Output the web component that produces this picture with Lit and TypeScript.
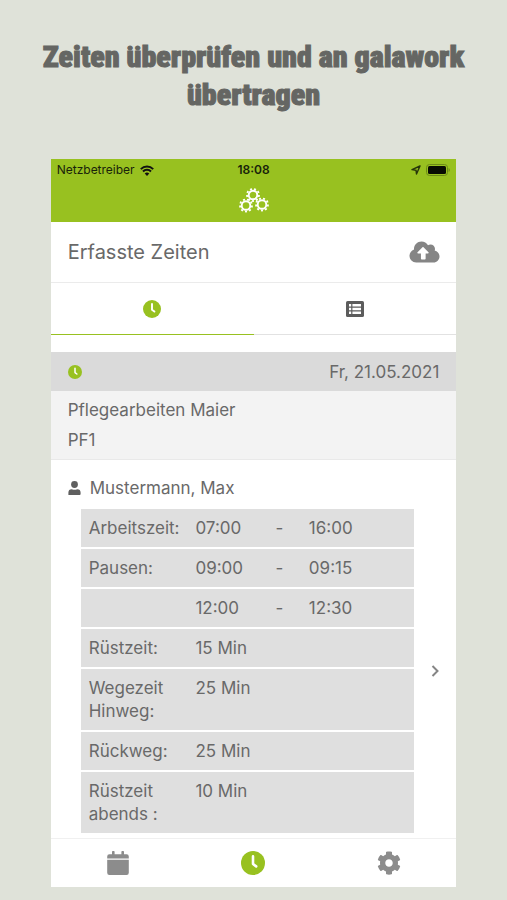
import { LitElement, html, css, svg, nothing } from "lit";
import { customElement, property, state } from "lit/decorators.js";

const icons = {
  clock: svg`<circle cx="12" cy="12" r="12" fill="currentColor"/><path d="M12 5.4V13l3.2 2.4" fill="none" stroke="#fff" stroke-width="2.6" stroke-linecap="round" stroke-linejoin="round"/>`,
  list: svg`<rect x="3" y="4" width="18" height="16" rx="1.6" fill="currentColor"/><path fill="#fff" d="M6 7h2.2v2.4H6zM9.4 7H18v2.4H9.4zM6 10.8h2.2v2.4H6zM9.4 10.8H18v2.4H9.4zM6 14.6h2.2V17H6zM9.4 14.6H18V17H9.4z"/>`,
  calendar: svg`<path fill="currentColor" d="M1.2 7.6V5.4Q1.2 3.2 3.4 3.2H6V.8Q6 0 6.8 0h1q.8 0 .8.8v2.4h6.8V.8q0-.8.8-.8h1q.8 0 .8.8v2.4h2.6q2.2 0 2.2 2.2v2.2zM1.2 8.8h21.6v13q0 2.2-2.2 2.2H3.4q-2.2 0-2.2-2.2z"/>`,
};

@customElement("app-icon")
export class AppIcon extends LitElement {
  static styles = css`
    :host { display: inline-flex; }
    svg { display: block; width: 100%; height: 100%; }
  `;
  @property() name: keyof typeof icons = "clock";
  render() {
    return html`<svg viewBox="0 0 24 24" aria-hidden="true">${icons[this.name]}</svg>`;
  }
}

const gear = (x: number, y: number) => svg`
  <circle cx=${x} cy=${y} r="4.3" stroke-width="1.9"/>
  <circle cx=${x} cy=${y} r="6" stroke-width="1.8" pathLength="18" stroke-dasharray="1 1"/>`;

interface Entry {
  label: string;
  from: string;
  to?: string;
}

@customElement("app-root")
export class AppRoot extends LitElement {
  static styles = css`
    :host {
      display: block;
      min-height: 100vh;
      box-sizing: border-box;
      padding: 38px 10% 14px;
      background: #dfe2d9;
      color: #696969;
      font-family: Inter, Roboto, sans-serif;
      font-size: 17px;
      line-height: 22px;
    }
    h1 {
      margin: 0 -32px 45px;
      color: #656663;
      font: 900 30px/38px Impact, "Roboto Condensed", Roboto, sans-serif;
      -webkit-text-stroke: 1px currentColor;
      text-align: center;
    }
    .phone { display: flex; flex-direction: column; background: #fff; }
    .top { background: #98c120; color: #18230a; padding-bottom: 6px; }
    .status {
      display: grid;
      grid-template-columns: 1fr auto 1fr;
      align-items: center;
      padding: 0 6px;
      font-size: 12px;
      line-height: 22px;
    }
    .status b { font-weight: 600; }
    .side { display: flex; align-items: center; gap: 5px; }
    .end { justify-content: flex-end; }
    .wifi { width: 14px; height: 11px; }
    .arrow { width: 10px; height: 10px; }
    .battery { width: 24px; height: 12px; }
    .logo { display: block; width: 32px; height: 30px; margin: 5px auto 0; }
    .title {
      display: flex;
      align-items: center;
      justify-content: space-between;
      padding: 0 16px 0 17px;
      height: 60px;
      border-bottom: 1px solid #ebebeb;
    }
    h2 { margin: 0; font-size: 20px; font-weight: 400; line-height: 26px; }
    button {
      display: flex;
      align-items: center;
      justify-content: center;
      border: 0;
      padding: 0;
      background: none;
      color: #858585;
      font: inherit;
      cursor: pointer;
    }
    .cloud { width: 31px; height: 24px; }
    .tabs { display: grid; grid-template-columns: 1fr 1fr; margin-bottom: 17px; }
    .tab { height: 52px; border-bottom: 1px solid #e2e2e2; color: #5c5c5c; }
    .tab.on { color: #98c120; border-bottom-color: #98c120; }
    .tab app-icon { width: 18px; height: 18px; }
    .tab .wide { width: 24px; height: 24px; }
    .date {
      display: flex;
      align-items: center;
      justify-content: space-between;
      height: 39px;
      padding: 0 17px;
      background: #dadada;
    }
    .date app-icon { width: 14px; height: 14px; color: #98c120; }
    .job {
      padding: 4px 17px;
      line-height: 30px;
      background: #f3f3f3;
      border-bottom: 1px solid #e9e9e9;
    }
    .job p { margin: 0; }
    .person { display: flex; align-items: center; gap: 8px; padding: 17px 17px 9px; }
    .user { width: 14px; height: 14px; color: #5f5f5f; }
    .record { display: flex; align-items: center; padding: 0 16px 4px 30px; }
    table {
      flex: 1;
      margin: -1px 0;
      table-layout: fixed;
      border-collapse: separate;
      border-spacing: 0 2px;
      line-height: 23px;
    }
    .c1 { width: 32%; }
    .c2 { width: 24%; }
    .c3 { width: 10%; }
    .c4 { width: 34%; }
    th, td {
      padding: 8px 0 7px 8px;
      background: #dfdfdf;
      font-weight: 400;
      text-align: left;
      vertical-align: top;
    }
    .next { width: 26px; height: 44px; justify-content: flex-end; }
    .chevron { width: 9px; height: 14px; }
    nav {
      display: grid;
      grid-template-columns: repeat(3, 1fr);
      border-top: 1px solid #f0f0f0;
    }
    nav button { height: 48px; color: #8c8c8c; }
    nav .on { color: #98c120; }
    nav app-icon, .cog { width: 24px; height: 24px; }
  `;

  @state() private tab = 0;

  private entries: Entry[] = [
    { label: "Arbeitszeit:", from: "07:00", to: "16:00" },
    { label: "Pausen:", from: "09:00", to: "09:15" },
    { label: "", from: "12:00", to: "12:30" },
    { label: "Rüstzeit:", from: "15 Min" },
    { label: "Wegezeit Hinweg:", from: "25 Min" },
    { label: "Rückweg:", from: "25 Min" },
    { label: "Rüstzeit abends :", from: "10 Min" },
  ];

  render() {
    return html`
      <h1>Zeiten überprüfen und an galawork übertragen</h1>
      <main class="phone">
        <header class="top">
          <div class="status">
            <span class="side">Netzbetreiber
              <svg class="wifi" viewBox="0 0 14 11" fill="none" stroke="#111" stroke-width="2">
                <path d="M.8 4.1a8.8 8.8 0 0 1 12.4 0M3 6.5a5.6 5.6 0 0 1 8 0"/>
                <path d="M7 11 4.7 8.6a3.3 3.3 0 0 1 4.6 0z" fill="#111" stroke="none"/>
              </svg>
            </span>
            <b>18:08</b>
            <span class="side end">
              <svg class="arrow" viewBox="0 0 10 10"><path d="M9 1 1 4.6l4 .6.5 3.8z" fill="none" stroke="#26360a" stroke-width="1.4" stroke-linejoin="round"/></svg>
              <svg class="battery" viewBox="0 0 24 12">
                <rect x=".5" y=".5" width="21" height="11" rx="3" fill="none" stroke="#6c8a17"/>
                <rect x="2" y="2" width="18" height="8" rx="1.5" fill="#080c02"/>
                <path d="M22.6 4v4q1.2-.6 1.2-2t-1.2-2" fill="#6c8a17"/>
              </svg>
            </span>
          </div>
          <svg class="logo" viewBox="0 0 32 30" fill="none" stroke="#fff" role="img" aria-label="galawork">
            ${gear(15, 9)}${gear(8, 19.5)}${gear(24, 18.5)}
          </svg>
        </header>
        <div class="title">
          <h2>Erfasste Zeiten</h2>
          <button aria-label="Zeiten übertragen">
            <svg class="cloud" viewBox="0 0 640 512"><path fill="currentColor" d="M537.6 226.6c4.1-10.7 6.4-22.4 6.4-34.6 0-53-43-96-96-96-19.7 0-38.1 6-53.3 16.2C367 64.2 315.3 32 256 32c-88.4 0-160 71.6-160 160 0 2.7.1 5.4.2 8.1C40.2 219.8 0 273.2 0 336c0 79.5 64.5 144 144 144h368c70.7 0 128-57.3 128-128 0-61.9-44-113.6-102.4-125.4zM393.400 288H344v112c0 8.800-7.200 16-16 16h-68c-8.800 0-16-7.200-16-16V288h-61.400c-14.300 0-21.400-17.200-11.300-27.300l105.400-105.400c6.200-6.200 16.400-6.200 22.600 0l105.400 105.400c10.100 10.100 2.900 27.300-11.300 27.300z"/></svg>
          </button>
        </div>
        <div class="tabs" role="tablist">
          <button class="tab ${this.tab === 0 ? "on" : ""}" role="tab" aria-label="Zeiten" @click=${() => (this.tab = 0)}>
            <app-icon name="clock"></app-icon>
          </button>
          <button class="tab ${this.tab === 1 ? "on" : ""}" role="tab" aria-label="Liste" @click=${() => (this.tab = 1)}>
            <app-icon class="wide" name="list"></app-icon>
          </button>
        </div>
        <div class="date"><app-icon name="clock"></app-icon><time datetime="2021-05-21">Fr, 21.05.2021</time></div>
        <div class="job"><p>Pflegearbeiten Maier</p><p>PF1</p></div>
        <div class="person">
          <svg class="user" viewBox="0 0 14 14" fill="currentColor"><circle cx="6.5" cy="3.5" r="3.4"/><path d="M.4 14v-2.4Q.4 8.2 3.8 8.2q2.7 1 5.4 0 3.4 0 3.4 3.4V13q0 1-1 1z"/></svg>
          <span>Mustermann, Max</span>
        </div>
        <div class="record">
          <table>
            <colgroup><col class="c1"><col class="c2"><col class="c3"><col class="c4"></colgroup>
            <tbody>
              ${this.entries.map((e) => html`<tr>
                <th scope="row">${e.label}</th>
                <td colspan=${e.to ? 1 : 3}>${e.from}</td>
                ${e.to ? html`<td>-</td><td>${e.to}</td>` : nothing}
              </tr>`)}
            </tbody>
          </table>
          <button class="next" aria-label="Details">
            <svg class="chevron" viewBox="0 0 9 14"><path d="m1.5 2 5 5-5 5" fill="none" stroke="currentColor" stroke-width="2"/></svg>
          </button>
        </div>
        <nav>
          <button aria-label="Kalender"><app-icon name="calendar"></app-icon></button>
          <button class="on" aria-label="Zeiten"><app-icon name="clock"></app-icon></button>
          <button aria-label="Einstellungen">
            <svg class="cog" viewBox="0 0 512 512"><path fill="currentColor" d="M487.4 315.7l-42.6-24.6c4.3-23.2 4.3-47 0-70.2l42.6-24.6c4.9-2.8 7.1-8.6 5.5-14-11.1-35.6-30-67.8-54.7-94.6-3.8-4.1-10-5.1-14.8-2.3L380.8 110c-17.9-15.4-38.5-27.3-60.8-35.1V25.8c0-5.6-3.9-10.5-9.4-11.7-36.7-8.2-74.3-7.8-109.2 0-5.5 1.2-9.4 6.1-9.4 11.7V75c-22.2 7.9-42.8 19.8-60.8 35.1L88.7 85.5c-4.9-2.8-11-1.9-14.8 2.3-24.7 26.7-43.6 58.9-54.7 94.6-1.7 5.4.6 11.2 5.5 14L67.3 221c-4.3 23.2-4.3 47 0 70.2l-42.6 24.6c-4.9 2.8-7.1 8.6-5.5 14 11.1 35.6 30 67.8 54.7 94.6 3.8 4.1 10 5.1 14.8 2.3l42.6-24.6c17.9 15.4 38.5 27.3 60.8 35.1v49.2c0 5.6 3.9 10.5 9.4 11.7 36.7 8.2 74.3 7.8 109.2 0 5.5-1.2 9.4-6.1 9.4-11.7v-49.2c22.2-7.9 42.8-19.8 60.8-35.1l42.6 24.6c4.9 2.8 11 1.9 14.8-2.3 24.7-26.7 43.6-58.9 54.7-94.6 1.5-5.5-.7-11.3-5.6-14.1zM256 336c-44.1 0-80-35.9-80-80s35.9-80 80-80 80 35.9 80 80-35.9 80-80 80z"/></svg>
          </button>
        </nav>
      </main>
    `;
  }
}
